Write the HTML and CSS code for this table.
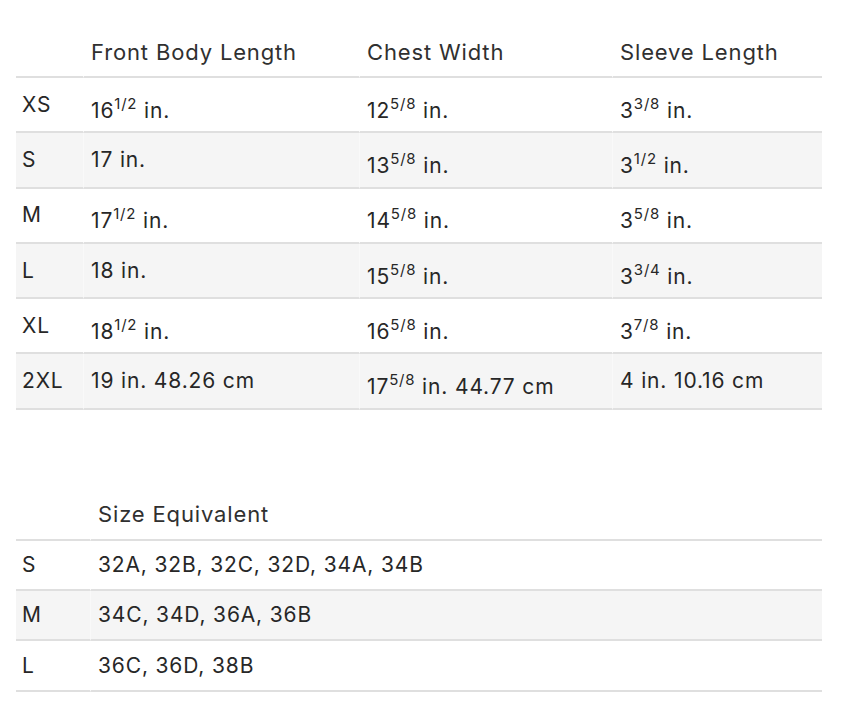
FILE: index.html
```html
<!DOCTYPE html>
<html lang="en">
<head>
<meta charset="utf-8">
<title>Size chart</title>
<link rel="stylesheet" href="styles.css">
</head>
<body>
<div class="page">
  <table class="chart chart-measure">
    <colgroup>
      <col class="c-size">
      <col class="c-front">
      <col class="c-chest">
      <col class="c-sleeve">
    </colgroup>
    <thead>
      <tr>
        <th></th>
        <th>Front Body Length</th>
        <th>Chest Width</th>
        <th>Sleeve Length</th>
      </tr>
    </thead>
    <tbody>
      <tr>
        <td>XS</td>
        <td>16<sup>1/2</sup> in.</td>
        <td>12<sup>5/8</sup> in.</td>
        <td>3<sup>3/8</sup> in.</td>
      </tr>
      <tr>
        <td>S</td>
        <td>17 in.</td>
        <td>13<sup>5/8</sup> in.</td>
        <td>3<sup>1/2</sup> in.</td>
      </tr>
      <tr>
        <td>M</td>
        <td>17<sup>1/2</sup> in.</td>
        <td>14<sup>5/8</sup> in.</td>
        <td>3<sup>5/8</sup> in.</td>
      </tr>
      <tr>
        <td>L</td>
        <td>18 in.</td>
        <td>15<sup>5/8</sup> in.</td>
        <td>3<sup>3/4</sup> in.</td>
      </tr>
      <tr>
        <td>XL</td>
        <td>18<sup>1/2</sup> in.</td>
        <td>16<sup>5/8</sup> in.</td>
        <td>3<sup>7/8</sup> in.</td>
      </tr>
      <tr>
        <td>2XL</td>
        <td>19 in. 48.26 cm</td>
        <td>17<sup>5/8</sup> in. 44.77 cm</td>
        <td>4 in. 10.16 cm</td>
      </tr>
    </tbody>
  </table>

  <table class="chart chart-equiv">
    <colgroup>
      <col class="c-size2">
      <col>
    </colgroup>
    <thead>
      <tr>
        <th></th>
        <th>Size Equivalent</th>
      </tr>
    </thead>
    <tbody>
      <tr>
        <td>S</td>
        <td>32A, 32B, 32C, 32D, 34A, 34B</td>
      </tr>
      <tr>
        <td>M</td>
        <td>34C, 34D, 36A, 36B</td>
      </tr>
      <tr>
        <td>L</td>
        <td>36C, 36D, 38B</td>
      </tr>
    </tbody>
  </table>
</div>
</body>
</html>
```

FILE: styles.css
```css
html, body {
  margin: 0;
  padding: 0;
  background: #ffffff;
}

body {
  font-family: Inter, "Liberation Sans", Arial, sans-serif;
  font-size: 21px;
  letter-spacing: 0.85px;
  color: #272727;
}

.page {
  padding: 27px 24px 0 16px;
  display: flex;
  flex-direction: column;
  gap: 80px;
}

.chart {
  width: 100%;
  table-layout: fixed;
  border-collapse: separate;
  border-spacing: 0;
}

.chart th,
.chart td {
  text-align: left;
  font-weight: 400;
  padding: 0 4px 0 7px;
  vertical-align: middle;
  border-bottom: 2px solid #dfdfdf;
  border-left: 1px solid rgba(255, 255, 255, 0.4);
  line-height: 24px;
  white-space: nowrap;
}

.chart th:first-child,
.chart td:first-child {
  border-left: none;
  padding-left: 6px;
}

.chart th {
  height: 49px;
  font-size: 22px;
  letter-spacing: 0.85px;
  color: #303030;
}

.chart-measure td {
  height: 53.3px;
}

.chart-equiv td {
  height: 48.3px;
}

.chart tbody tr:nth-child(even) td {
  background: #f5f5f5;
}

.chart sup {
  font-size: 15px;
  letter-spacing: 0.8px;
  line-height: 33px;
  vertical-align: 9px;
}

.c-size { width: 67px; }
.c-front { width: 276px; }
.c-chest { width: 253px; }
.c-sleeve { width: 210px; }

.c-size2 { width: 74px; }
```
